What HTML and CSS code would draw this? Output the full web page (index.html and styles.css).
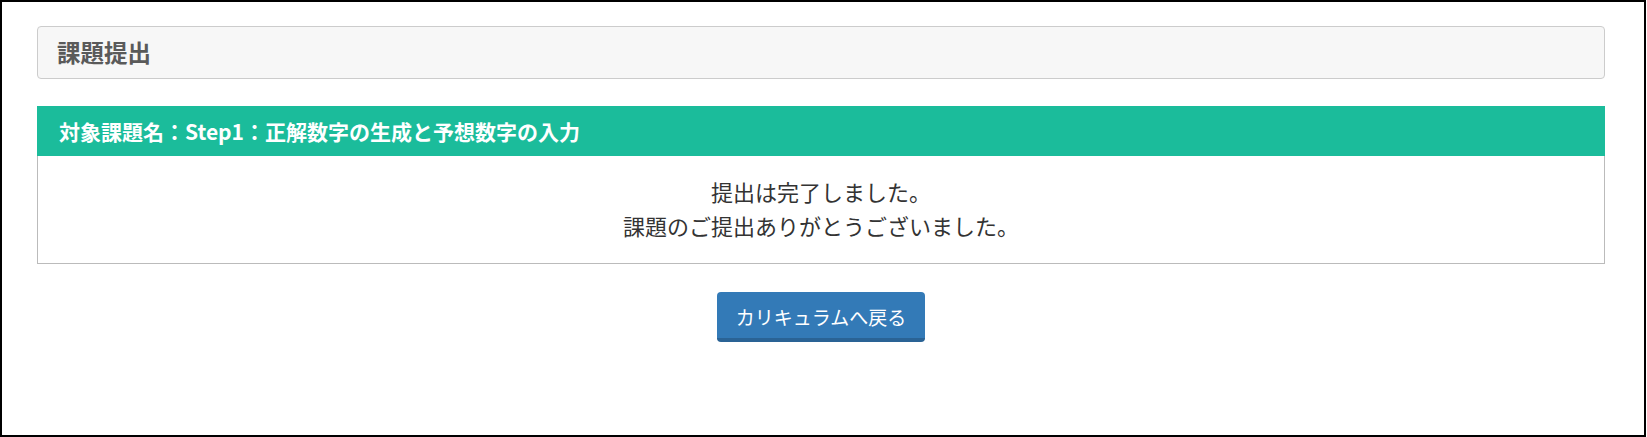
FILE: index.html
```html
<!DOCTYPE html>
<html lang="ja">
<head>
<meta charset="utf-8">
<title>課題提出</title>
<link rel="stylesheet" href="styles.css">
</head>
<body>
<div class="frame">
  <div class="container">
    <div class="page-head">
      <h1 class="page-title">課題提出</h1>
    </div>
    <div class="task-panel">
      <div class="task-head">対象課題名：Step1：正解数字の生成と予想数字の入力</div>
      <div class="task-body">
        <p class="msg">提出は完了しました。</p>
        <p class="msg">課題のご提出ありがとうございました。</p>
      </div>
    </div>
    <div class="actions">
      <a class="btn-back" href="#">カリキュラムへ戻る</a>
    </div>
  </div>
</div>
</body>
</html>
```

FILE: styles.css
```css
html, body {
  margin: 0;
  padding: 0;
  background: #ffffff;
}
body {
  font-family: "Noto Sans CJK JP", "Noto Sans", sans-serif;
  color: #333333;
}
.frame {
  box-sizing: border-box;
  width: 1646px;
  height: 437px;
  border: 2px solid #000000;
  padding: 24px 0 0 35px;
}
.container {
  width: 1568px;
}
.page-head {
  box-sizing: border-box;
  height: 53px;
  border: 1px solid #cccccc;
  border-radius: 4px;
  background: #f7f7f7;
  padding: 0 19px;
  display: flex;
  align-items: center;
}
.page-title {
  margin: 0;
  font-size: 23.5px;
  font-weight: bold;
  color: #5a5a5a;
  line-height: 1;
}
.task-panel {
  margin-top: 27px;
}
.task-head {
  height: 50px;
  background: #1bbc9b;
  color: #ffffff;
  font-weight: bold;
  font-size: 21px;
  line-height: 50px;
  padding: 0 22px;
}
.task-body {
  border: 1px solid #bbbbbb;
  border-top: none;
  padding: 19px 0 21px;
  text-align: center;
}
.msg {
  margin: 0;
  font-size: 22px;
  line-height: 33.5px;
  color: #333333;
}
.actions {
  display: flex;
  justify-content: center;
  margin-top: 28px;
}
.btn-back {
  box-sizing: border-box;
  width: 208px;
  height: 50px;
  display: flex;
  align-items: center;
  justify-content: center;
  background: #337ab7;
  border-bottom: 4px solid #2a6395;
  border-radius: 4px;
  color: #ffffff;
  text-decoration: none;
  font-size: 19px;
  padding-top: 3px;
}
```
